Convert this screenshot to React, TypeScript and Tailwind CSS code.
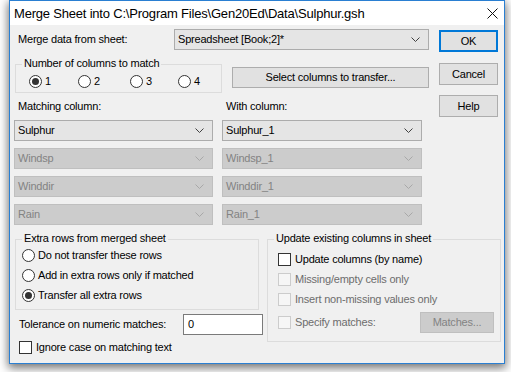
import React from "react";

function Chevron({ color }: { color: string }) {
  return (
    <svg width="9" height="5" viewBox="0 0 9 5" className="shrink-0">
      <polyline points="0.5,0.5 4.5,4.5 8.5,0.5" fill="none" stroke={color} strokeWidth="1" />
    </svg>
  );
}

function Combo({ text, disabled, w }: { text: string; disabled?: boolean; w: string }) {
  return (
    <div
      className={`${w} h-[21px] flex items-center justify-between pl-[3px] pr-[8px] border ${
        disabled ? "bg-[#cccccc] border-[#bfbfbf] text-[#838383]" : "bg-[#e5e5e5] border-[#acacac] text-black"
      }`}
    >
      <span>{text}</span>
      <Chevron color={disabled ? "#a8a8a8" : "#404040"} />
    </div>
  );
}

function Radio({ checked }: { checked?: boolean }) {
  return (
    <span className="w-[13px] h-[13px] rounded-full border border-[#333333] bg-white flex items-center justify-center shrink-0">
      {checked && <span className="w-[7px] h-[7px] rounded-full bg-[#333333]" />}
    </span>
  );
}

function Check({ disabled }: { disabled?: boolean }) {
  return (
    <span
      className={`w-[13px] h-[13px] border shrink-0 ${
        disabled ? "border-[#cccccc] bg-[#f6f6f6]" : "border-[#333333] bg-white"
      }`}
    />
  );
}

function Button({ children, w, def }: { children: React.ReactNode; w: string; def?: boolean }) {
  return (
    <div
      className={`${w} flex items-center justify-center bg-[#e1e1e1] ${
        def ? "border-2 border-[#0078d7]" : "border border-[#adadad]"
      }`}
    >
      {children}
    </div>
  );
}

export default function App() {
  return (
    <div className="w-[511px] h-[372px] bg-white pl-[9px] font-['Liberation_Sans',Arial,sans-serif] text-[11px] tracking-[-0.2px] text-black leading-none">
      <div className="w-[496px] h-[364px] border border-[#2a7fd2] bg-[#f0f0f0] flex flex-col shadow-[0_3px_9px_1px_rgba(0,0,0,0.55)]">
        {/* Title bar */}
        <div className="h-[24px] bg-white flex items-center justify-between pl-[4px] pr-[6px] text-[13px]">
          <span>Merge Sheet into C:\Program Files\Gen20Ed\Data\Sulphur.gsh</span>
          <svg width="11" height="11" viewBox="0 0 11 11">
            <path d="M0.5 0.5 L10.5 10.5 M10.5 0.5 L0.5 10.5" stroke="#111" strokeWidth="1" />
          </svg>
        </div>

        {/* Client */}
        <div className="flex-1 pl-[4px] pt-[4px] flex flex-col">
          <div className="flex">
            <div className="w-[415px] flex flex-col">
              <div className="flex items-center h-[21px]">
                <span className="w-[160px] pl-[4px]">Merge data from sheet:</span>
                <Combo w="w-[255px]" text="Spreadsheet [Book;2]*" />
              </div>

              <div className="flex items-start mt-[14px]">
                <div className="relative ml-[1px] w-[207px] h-[29px] border border-[#dcdcdc] flex items-center pl-[13px] pt-[6px]">
                  <span className="absolute -top-[7px] left-[6px] px-[2px] bg-[#f0f0f0]">Number of columns to match</span>
                  <div className="w-[49px] flex items-center gap-[3px]">
                    <Radio checked />
                    <span>1</span>
                  </div>
                  <div className="w-[52px] flex items-center gap-[3px]">
                    <Radio />
                    <span>2</span>
                  </div>
                  <div className="w-[48px] flex items-center gap-[3px]">
                    <Radio />
                    <span>3</span>
                  </div>
                  <div className="flex items-center gap-[3px]">
                    <Radio />
                    <span>4</span>
                  </div>
                </div>
                <div className="ml-[10px] mt-[3px] h-[21px] flex">
                  <Button w="w-[197px]">Select columns to transfer...</Button>
                </div>
              </div>

              <div className="grid grid-cols-[208px_200px] mt-[6px] h-[14px] items-center">
                <span className="pl-[4px]">Matching column:</span>
                <span className="pl-[4px]">With column:</span>
              </div>

              <div className="flex flex-col gap-[7px] mt-[7px]">
                <div className="flex gap-[9px]">
                  <Combo w="w-[199px]" text="Sulphur" />
                  <Combo w="w-[200px]" text="Sulphur_1" />
                </div>
                <div className="flex gap-[9px]">
                  <Combo w="w-[199px]" text="Windsp" disabled />
                  <Combo w="w-[200px]" text="Windsp_1" disabled />
                </div>
                <div className="flex gap-[9px]">
                  <Combo w="w-[199px]" text="Winddir" disabled />
                  <Combo w="w-[200px]" text="Winddir_1" disabled />
                </div>
                <div className="flex gap-[9px]">
                  <Combo w="w-[199px]" text="Rain" disabled />
                  <Combo w="w-[200px]" text="Rain_1" disabled />
                </div>
              </div>
            </div>

            <div className="ml-[10px] flex flex-col pt-[1px]">
              <div className="h-[22px] flex">
                <Button w="w-[59px]" def>
                  OK
                </Button>
              </div>
              <div className="h-[22px] flex mt-[11px]">
                <Button w="w-[59px]">Cancel</Button>
              </div>
              <div className="h-[22px] flex mt-[10px]">
                <Button w="w-[59px]">Help</Button>
              </div>
            </div>
          </div>

          {/* Bottom section */}
          <div className="flex mt-[14px]">
            <div className="w-[249px] flex flex-col">
              <div className="relative ml-[1px] w-[244px] h-[71px] border border-[#dcdcdc] flex flex-col pl-[6px] pt-[5px]">
                <span className="absolute -top-[7px] left-[6px] px-[2px] bg-[#f0f0f0]">Extra rows from merged sheet</span>
                <div className="h-[20px] flex items-center gap-[3px]">
                  <Radio />
                  <span>Do not transfer these rows</span>
                </div>
                <div className="h-[20px] flex items-center gap-[3px]">
                  <Radio />
                  <span>Add in extra rows only if matched</span>
                </div>
                <div className="h-[20px] flex items-center gap-[3px]">
                  <Radio checked />
                  <span>Transfer all extra rows</span>
                </div>
              </div>

              <div className="flex items-center mt-[4px]">
                <span className="w-[169px] pl-[5px]">Tolerance on numeric matches:</span>
                <div className="w-[80px] h-[21px] bg-white border border-[#7a7a7a] flex items-center pl-[4px]">0</div>
              </div>

              <div className="flex items-center gap-[4px] mt-[6px] pl-[5px]">
                <Check />
                <span>Ignore case on matching text</span>
              </div>
            </div>

            <div className="relative ml-[4px] w-[234px] h-[103px] border border-[#dcdcdc] flex flex-col pl-[10px] pt-[9px] pr-[6px]">
              <span className="absolute -top-[7px] left-[6px] px-[2px] bg-[#f0f0f0]">Update existing columns in sheet</span>
              <div className="h-[20px] flex items-center gap-[4px]">
                <Check />
                <span>Update columns (by name)</span>
              </div>
              <div className="h-[20px] flex items-center gap-[4px] text-[#6d6d6d]">
                <Check disabled />
                <span>Missing/empty cells only</span>
              </div>
              <div className="h-[20px] flex items-center gap-[4px] text-[#6d6d6d]">
                <Check disabled />
                <span>Insert non-missing values only</span>
              </div>
              <div className="h-[22px] mt-[2px] flex items-center gap-[4px] text-[#6d6d6d]">
                <Check disabled />
                <span>Specify matches:</span>
                <div className="ml-auto w-[74px] h-[21px] bg-[#cccccc] border border-[#bfbfbf] text-[#838383] flex items-center justify-center">
                  Matches...
                </div>
              </div>
            </div>
          </div>
        </div>
      </div>
    </div>
  );
}
